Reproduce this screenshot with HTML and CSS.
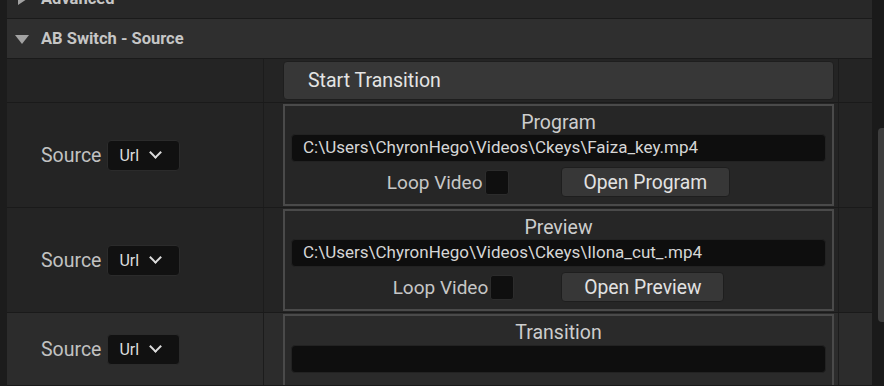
FILE: index.html
```html
<!DOCTYPE html>
<html lang="en">
<head>
  <meta charset="UTF-8" />
  <meta name="viewport" content="width=device-width, initial-scale=1.0"/>
  <title>AB Switch - Source</title>

  <link rel="stylesheet" href="styles.css">
</head>
<body>

  <div class="details">
    <div class="strip"></div>

    <div class="panel">
      <!-- collapsed category above -->
      <div class="category collapsed">
        <span class="arrow arrow-right"></span>
        <span class="category-title">Advanced</span>
      </div>

      <div class="category">
        <span class="arrow arrow-down"></span>
        <span class="category-title">AB Switch - Source</span>
      </div>

      <!-- Start Transition -->
      <div class="prop-row">
        <div class="name-cell"></div>
        <div class="value-cell">
          <button class="wide-btn" type="button">Start Transition</button>
        </div>
        <div class="extra-cell"></div>
      </div>

      <!-- Program -->
      <div class="prop-row">
        <div class="name-cell">
          <span class="prop-name">Source</span>
          <div class="combo">Url <span class="chevron"></span></div>
        </div>
        <div class="value-cell">
          <div class="group">
            <div class="group-title">Program</div>
            <div class="path-box">C:\Users\ChyronHego\Videos\Ckeys\Faiza_key.mp4</div>
            <div class="loop-row">
              <label class="loop">Loop Video<span class="check"></span></label>
              <button class="open-btn" type="button">Open Program</button>
            </div>
          </div>
        </div>
        <div class="extra-cell"></div>
      </div>

      <!-- Preview -->
      <div class="prop-row">
        <div class="name-cell">
          <span class="prop-name">Source</span>
          <div class="combo">Url <span class="chevron"></span></div>
        </div>
        <div class="value-cell">
          <div class="group">
            <div class="group-title">Preview</div>
            <div class="path-box">C:\Users\ChyronHego\Videos\Ckeys\Ilona_cut_.mp4</div>
            <div class="loop-row loop-row-narrow">
              <label class="loop">Loop Video<span class="check"></span></label>
              <button class="open-btn" type="button">Open Preview</button>
            </div>
          </div>
        </div>
        <div class="extra-cell"></div>
      </div>

      <!-- Transition (hovered) -->
      <div class="prop-row hovered last">
        <div class="name-cell">
          <span class="prop-name">Source</span>
          <div class="combo">Url <span class="chevron"></span></div>
        </div>
        <div class="value-cell">
          <div class="group">
            <div class="group-title">Transition</div>
            <div class="path-box"></div>
          </div>
        </div>
        <div class="extra-cell"></div>
      </div>
    </div>

    <div class="scrollbar">
      <div class="thumb"></div>
    </div>
  </div>

</body>
</html>
```

FILE: styles.css
```css
body {
  margin: 0;
  padding: 0;
  background: #1b1b1b;
  font-family: Roboto, 'Noto Sans', sans-serif;
  color: #c4c4c4;
  overflow: hidden;
  height: 386px;
}

.details {
  display: flex;
  height: 386px;
  overflow: hidden;
}

.strip {
  width: 7px;
  background: #1c1c1c;
  flex-shrink: 0;
}

.panel {
  width: 865px;
  flex-shrink: 0;
  display: flex;
  flex-direction: column;
  background: #242424;
}

/* category headers */
.category {
  height: 39px;
  display: flex;
  align-items: center;
  padding-left: 8px;
  background: #2f2f2f;
  border-bottom: 1px solid #1a1a1a;
  flex-shrink: 0;
}

.category.collapsed {
  margin-top: -21px;
  background: #282828;
}

.category-title {
  font-size: 16.5px;
  font-weight: bold;
  color: #c6c6c6;
  margin-left: 12px;
}

.arrow {
  width: 0;
  height: 0;
  display: inline-block;
}

.arrow-down {
  border-left: 7px solid transparent;
  border-right: 7px solid transparent;
  border-top: 9px solid #a2a2a2;
  margin-top: 1px;
}

.arrow-right {
  border-top: 6px solid transparent;
  border-bottom: 6px solid transparent;
  border-left: 9px solid #a2a2a2;
  margin-left: 3px;
  margin-right: 2px;
}

/* property rows */
.prop-row {
  display: flex;
  border-bottom: 1px solid #1a1a1a;
  flex-shrink: 0;
}

.prop-row.hovered {
  background: #2c2c2c;
}

.prop-row.last .value-cell {
  height: 72px;
  overflow: hidden;
  align-items: flex-start;
}

.name-cell {
  width: 257px;
  box-sizing: border-box;
  border-right: 1px solid #1c1c1c;
  display: flex;
  align-items: center;
  padding-left: 34px;
}

.value-cell {
  width: 575px;
  box-sizing: border-box;
  padding: 1px 4px 1px 19px;
  border-right: 1px solid #1c1c1c;
  display: flex;
}

.extra-cell {
  flex: 1;
}

.prop-name {
  font-size: 19.5px;
  color: #c2c2c2;
}

.combo {
  margin-left: 6px;
  width: 73px;
  height: 31px;
  box-sizing: border-box;
  padding-left: 11px;
  background: #111111;
  border: 1px solid #2b2b2b;
  border-radius: 4px;
  display: flex;
  align-items: center;
  font-size: 16px;
  color: #dcdcdc;
}

.chevron {
  width: 7px;
  height: 7px;
  border-right: 2px solid #dcdcdc;
  border-bottom: 2px solid #dcdcdc;
  transform: rotate(45deg);
  margin-left: 12px;
  margin-top: -5px;
}

/* buttons */
.wide-btn {
  width: 100%;
  height: 39px;
  margin: 1px 0;
  background: #373737;
  border: 1px solid #1e1e1e;
  border-radius: 4px;
  color: #e4e4e4;
  font-family: Roboto, 'Noto Sans', sans-serif;
  font-size: 19.5px;
  text-align: left;
  padding-left: 24px;
}

.open-btn {
  height: 30px;
  padding: 0 22px;
  background: #373737;
  border: 1px solid #1e1e1e;
  border-radius: 4px;
  color: #e2e2e2;
  font-family: Roboto, 'Noto Sans', sans-serif;
  font-size: 19.3px;
}

/* grouped value boxes */
.group {
  width: 100%;
  height: 102px;
  box-sizing: border-box;
  border: 2px solid #4a4a4a;
  background: #262626;
  padding: 7px 6px 0 6px;
}

.hovered .group {
  background: #2a2a2a;
}

.group-title {
  height: 20px;
  line-height: 20px;
  text-align: center;
  font-size: 19.5px;
  color: #cdcdcd;
}

.path-box {
  margin-top: 1px;
  height: 28px;
  box-sizing: border-box;
  background: #0e0e0e;
  border: 1px solid #222222;
  border-radius: 4px;
  padding-left: 11px;
  line-height: 25px;
  font-size: 17px;
  color: #d6d6d6;
  white-space: nowrap;
}

.hovered .path-box {
  margin-top: 2px;
}

.loop-row {
  margin-top: 5px;
  display: flex;
  justify-content: center;
  align-items: center;
  gap: 52px;
}

.loop-row-narrow {
  gap: 47px;
}

.loop {
  display: flex;
  align-items: center;
  font-size: 19px;
  color: #c6c6c6;
}

.check {
  width: 24px;
  height: 25px;
  box-sizing: border-box;
  margin-left: 2px;
  background: #0f0f0f;
  border: 1px solid #2c2c2c;
  border-radius: 3px;
}

/* scrollbar */
.scrollbar {
  flex: 1;
  background: #1a1a1a;
  display: flex;
  justify-content: flex-end;
}

.thumb {
  width: 6px;
  height: 194px;
  margin-top: 128px;
  background: #3d3d3d;
  border-radius: 4px 0 0 4px;
}
```
